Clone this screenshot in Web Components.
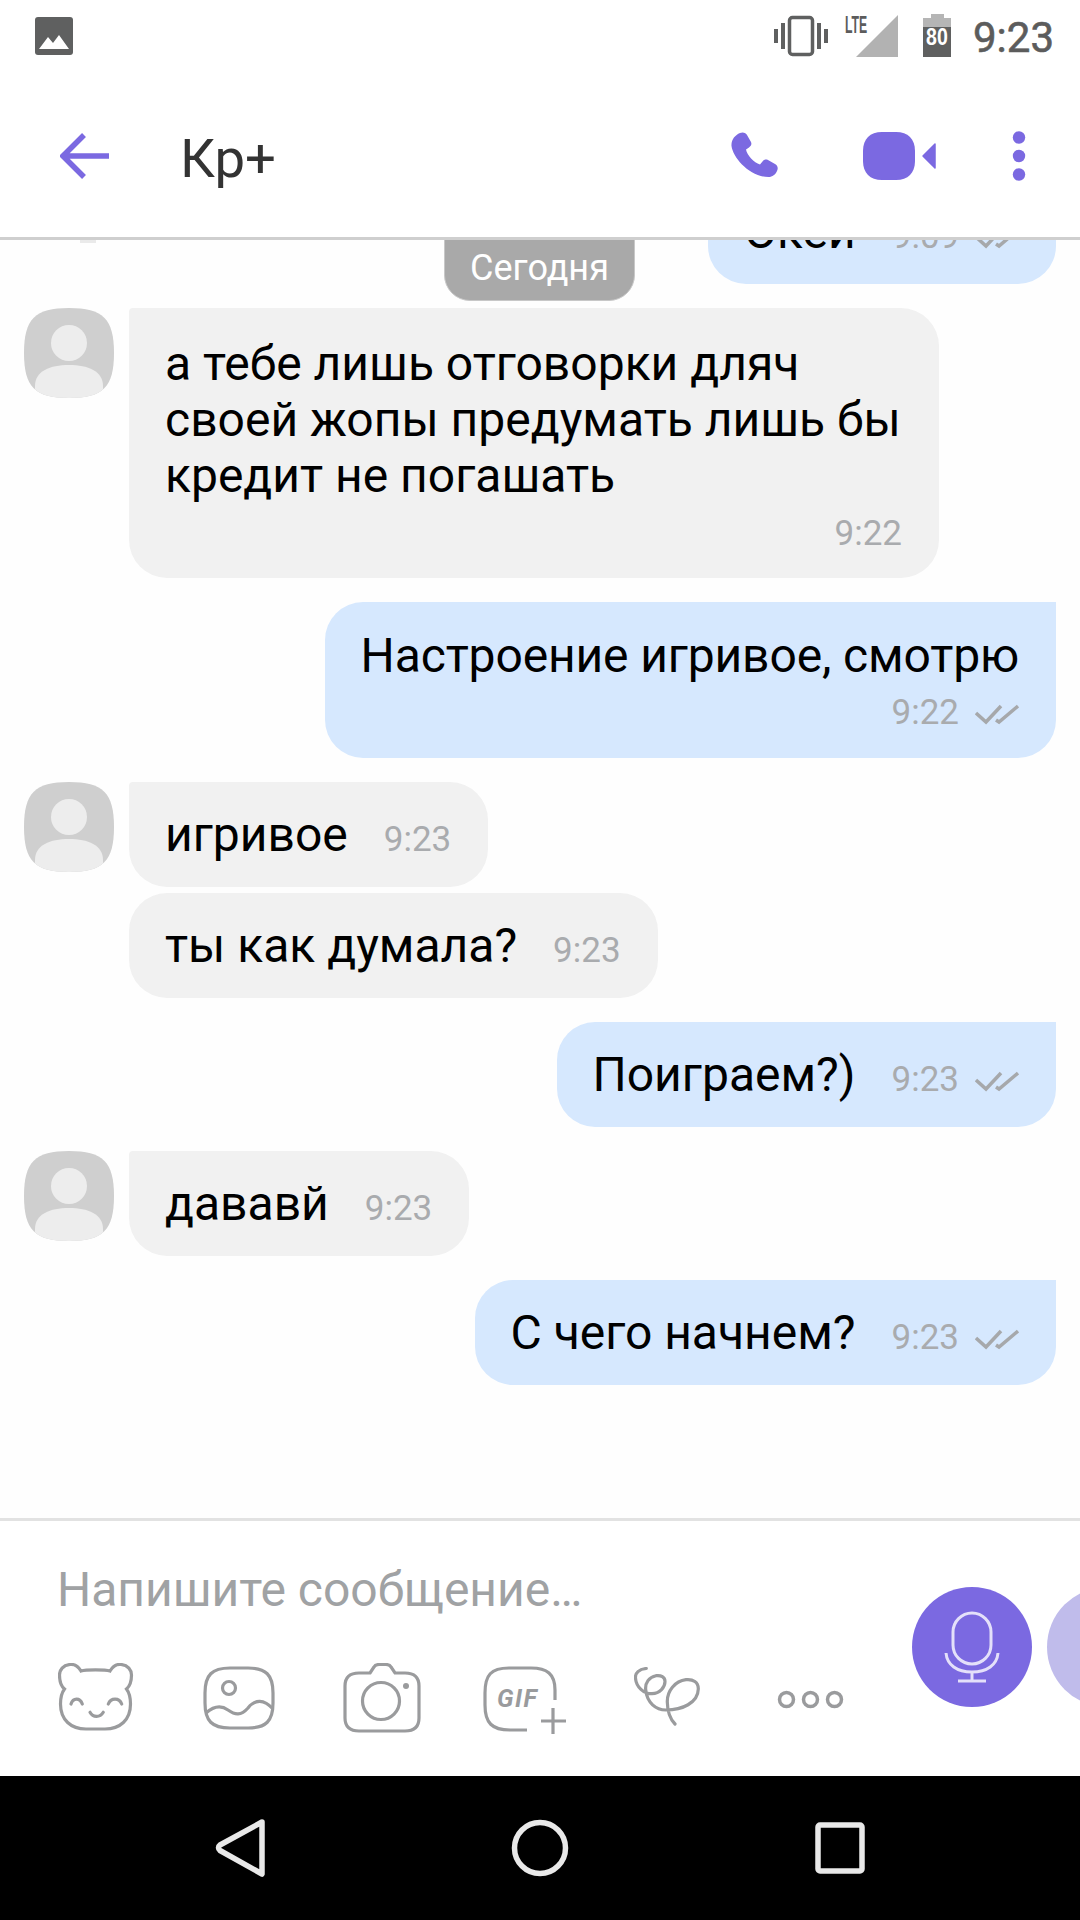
<!DOCTYPE html>
<html lang="ru"><head><meta charset="utf-8"><title>Кр+</title>
<style>
html,body{margin:0;padding:0;background:#fff}
body{width:1080px;height:1920px;overflow:hidden;display:flex;flex-direction:column;font-family:Roboto,"Noto Sans",sans-serif;color:#000}
x-chat{flex:1;min-height:0}
</style></head><body>
<x-status-bar></x-status-bar>
<x-app-header title="Кр+"></x-app-header>
<x-chat>
  <x-msg side="out" time="9:09" ticks style="--w:348px">Океи</x-msg>
  <x-msg side="in" avatar time="9:22" stacked style="--w:810px;--mt:24px;--pt:28px;--fm:6px;--pb:20px">а тебе лишь отговорки дляч<br>своей жопы предумать лишь бы<br>кредит не погашать</x-msg>
  <x-msg side="out" time="9:22" ticks stacked style="--mt:24px;--pt:26px;--fm:5px;--ls:-.14px">Настроение игривое, смотрю</x-msg>
  <x-msg side="in" avatar time="9:23" style="--mt:24px">игривое</x-msg>
  <x-msg side="in" time="9:23" follow style="--mt:6px">ты как думала?</x-msg>
  <x-msg side="out" time="9:23" ticks style="--mt:24px">Поиграем?)</x-msg>
  <x-msg side="in" avatar time="9:23" style="--mt:24px">дававй</x-msg>
  <x-msg side="out" time="9:23" ticks style="--mt:24px">С чего начнем?</x-msg>
</x-chat>
<x-composer placeholder="Напишите сообщение…"></x-composer>
<x-nav-bar></x-nav-bar>
<script>
function def(name, html){
  customElements.define(name, class extends HTMLElement{
    connectedCallback(){
      if(this.shadowRoot) return;
      const r=this.attachShadow({mode:'open'});
      r.innerHTML = typeof html==='function' ? html(this) : html;
    }
  });
}
const V='#7b69e1';
def('x-status-bar',`<style>
:host{display:flex;height:78px;align-items:flex-start;background:#fff;color:#5c5c5c;padding:0 26px 0 35px;box-sizing:border-box;flex:none}
svg{display:block;flex:none}
.sp{flex:1}
.lte{position:relative;width:53px;height:44px;margin:15px 0 0 17px;flex:none}
.lte span{position:absolute;left:0;top:-2px;font:700 24px/24px "Liberation Sans",sans-serif;transform:scaleX(.51);transform-origin:0 0}
.lte svg{position:absolute;left:11px;top:0}
.bat{position:relative;width:28px;height:43px;margin:14px 0 0 25px;flex:none}
.bat span{position:absolute;left:0;right:0;top:11px;text-align:center;color:#fff;font:700 23px/24px "Liberation Sans",sans-serif;transform:scaleX(.85)}
.t{font:400 42px/48px Roboto,sans-serif;margin:14px 0 0 22px;-webkit-text-stroke:.6px #5c5c5c}
</style>
<svg width="38" height="38" viewBox="0 0 38 38" style="margin-top:17px"><rect width="38" height="38" rx="3" fill="#5f6060"/><path d="M4 32l9-12 5 6 6-8 10 14z" fill="#fff"/></svg>
<div class="sp"></div>
<svg width="54" height="42" viewBox="0 0 54 42" style="margin-top:15px"><rect x="15.500" y="2.500" width="23" height="37" rx="3" fill="none" stroke="#5f6060" stroke-width="3.500"/><rect x="0" y="14" width="4" height="14" fill="#5f6060"/><rect x="7" y="8" width="4" height="26" fill="#5f6060"/><rect x="43" y="8" width="4" height="26" fill="#5f6060"/><rect x="50" y="14" width="4" height="14" fill="#5f6060"/></svg>
<div class="lte"><span>LTE</span><svg width="42" height="42" viewBox="0 0 42 42"><path d="M42 0v42H0z" fill="#b2b2b2"/></svg></div>
<div class="bat"><svg width="28" height="43" viewBox="0 0 28 43"><path d="M8 0h13v4h7v9H0V4h8z" fill="#b5b5b5"/><rect y="13" width="28" height="30" fill="#5f6060"/></svg><span>80</span></div>
<div class="t">9:23</div>`);
def('x-app-header',h=>`<style>
:host{display:flex;align-items:center;background:#fff;border-bottom:3px solid #cfcfcf;padding:0 54px 3px 60px;box-sizing:content-box;height:156px;position:relative;z-index:2;flex:none}
svg{display:block;flex:none}
.title{font:400 54.500px/64px Roboto,sans-serif;color:#333;margin:3px 0 0 71px;flex:1}
</style>
<svg width="49" height="48" viewBox="0 0 49 48"><path d="M24 3L3 24l21 21M3 24h46" fill="none" stroke="${V}" stroke-width="5.500"/></svg>
<div class="title">${h.getAttribute('title')}</div>
<svg width="48" height="48" viewBox="0 0 48 48"><path d="M9 1c3-1.500 6 0 7 2l4 7c1 2.500 0 4-2 5.500l-3 2c1 6 8 13 14 15l2.500-3c1.500-2 3.500-2.500 5.500-1.500l7 4c2.500 1.500 3.500 4 2 7-1.500 3.500-4.500 6-8.500 6C19 45 2 26 .5 14 0 8 4 3 9 1z" fill="${V}"/></svg>
<svg width="74" height="48" viewBox="0 0 74 48" style="margin-left:84px"><path d="M19 0h14c12 0 19 7 19 19v10c0 12-7 19-19 19H19C7 48 0 41 0 29V19C0 7 7 0 19 0z" fill="${V}"/><path d="M72 12v24L60 24z" fill="${V}" stroke="${V}" stroke-width="1.500" stroke-linejoin="round"/></svg>
<svg width="14" height="50" viewBox="0 0 14 50" style="margin-left:75px"><circle cx="7" cy="6.500" r="6.200" fill="${V}"/><circle cx="7" cy="25" r="6.200" fill="${V}"/><circle cx="7" cy="43.500" r="6.200" fill="${V}"/></svg>`);
def('x-chat',`<style>
:host{display:flex;flex-direction:column;justify-content:flex-end;overflow:hidden;background:#fefefe;padding:0 24px 133px;position:relative;box-sizing:border-box}
.pill{position:absolute;left:444px;top:-8px;width:191px;height:69px;box-sizing:border-box;background:#a9a9a9;border:1px solid #c8c8c8;border-radius:0 0 26px 26px;color:#fff;font:400 36px/40px Roboto,sans-serif;text-align:center;padding-top:15px}
.sliver{position:absolute;left:80px;top:0;width:16px;height:3px;background:#eaeaea}
</style><div class="pill">Сегодня</div><div class="sliver"></div><slot></slot>`);
def('x-avatar',`<style>
:host{display:block;width:90px;height:90px;flex:none}
svg{display:block}
</style><svg width="90" height="90" viewBox="0 0 90 90"><defs><clipPath id="c"><path d="M45 0c34 0 45 11 45 45s-11 45-45 45S0 79 0 45 11 0 45 0z"/></clipPath></defs><g clip-path="url(#c)"><rect width="90" height="90" fill="#cfcfcf"/><circle cx="45" cy="35" r="18" fill="#ededed"/><path d="M11 78C11 63 26 57 45 57s34 6 34 21v12H11z" fill="#ededed"/></g></svg>`);
const ticks=`<svg class="ticks" width="44" height="22" viewBox="0 0 44 22"><path d="M1 10l10 9L26 3M21 17l3 2L43 3" fill="none" stroke="#a6a8ab" stroke-width="3.500"/></svg>`;
def('x-msg',h=>{
  const out=h.getAttribute('side')==='out', st=h.hasAttribute('stacked'), w=h.style.getPropertyValue('--w');
  return `<style>
:host{display:flex;flex:none;margin-top:var(--mt,0);justify-content:${out?'flex-end':'flex-start'};gap:15px;${!out&&!h.hasAttribute('avatar')?'padding-left:105px;':''}}
.b{background:${out?'#d6e8fe':'#f1f1f1'};border-radius:${h.hasAttribute('follow')?'38px':out?'38px 0 38px 38px':'4px 38px 38px 38px'};padding:var(--pt,25px) 37px var(--pb,21px) 36px;font:400 48px/56px Roboto,sans-serif;color:#000;box-sizing:border-box;display:flex;${st?'flex-direction:column;':'align-items:baseline;gap:36px;'}${w?'width:var(--w);':''}}
.b.single{height:105px}
.f{display:flex;align-items:center;justify-content:flex-end;gap:16px;font:400 35px/48px Roboto,sans-serif;color:#a9abae;${st?'margin-top:var(--fm,6px);':''}align-self:${st?'flex-end':'baseline'}}
.ticks{display:block;margin-top:2px}
.tx{flex:${w&&!st?'1':'none'};letter-spacing:var(--ls,0)}
</style>${h.hasAttribute('avatar')?'<x-avatar></x-avatar>':''}<div class="b ${st?'':'single'}"><div class="tx"><slot></slot></div><div class="f"><span>${h.getAttribute('time')}</span>${h.hasAttribute('ticks')?ticks:''}</div></div>`;
});
const G='#9a9b9d';
def('x-composer',h=>`<style>
:host{display:flex;height:258px;box-sizing:border-box;border-top:3px solid #e2e2e2;background:#fff;overflow:hidden;flex:none;padding-left:58px}
.l{width:854px;flex:none}
.ph{font:400 48px/56px Roboto,sans-serif;color:#a0a2a4;margin:41px 0 0 -1px}
.tools{display:flex;align-items:flex-start;margin-top:45px}
svg{display:block;flex:none}
.r{display:flex;gap:15px;padding-top:66px;flex:none}
.c{width:120px;height:120px;border-radius:50%;background:${V};display:flex;align-items:center;justify-content:center;flex:none}
.c.b{background:#c0bceb}
</style><div class="l"><div class="ph">${h.getAttribute('placeholder')}</div><div class="tools">
<svg width="76" height="68" viewBox="0 0 76 68" fill="none" stroke="${G}" stroke-width="3.200" stroke-linecap="round"><path d="M23 8C20 3 16 1 12 1.500 5 2 1.500 7 1.500 12c0 6 1.500 11 5 14-3 4-4 9-4 15 0 16 10.500 25 25.500 25h19c15 0 25.500-9 25.500-25 0-6-1-11-4-15 3.500-3 5-8 5-14 0-5-3.500-10-10.500-10.500C59 1 55 3 52 8c-5-1.500-24-1.500-29 0z"/><path d="M13 41c2-6.500 9-6.500 11.300 0M50.300 41c2.500-6.500 11-6.500 13.400 0M32 49.300c3 5.500 10 5.500 13.300 0"/></svg>
<svg width="72" height="64" viewBox="0 0 72 64" style="margin:3px 0 0 69px" fill="none" stroke="${G}" stroke-width="3.200"><path d="M27 2h18c18 0 25 7 25 25v10c0 18-7 25-25 25H27C9 62 2 55 2 37V27C2 9 9 2 27 2z"/><circle cx="26" cy="22" r="6.500"/><path d="M3 47c8-7 15-8 22-3s13 6 20-2c7-9 16-9 25 1"/></svg>
<svg width="78" height="70" viewBox="0 0 78 70" style="margin-left:68px" fill="none" stroke="${G}" stroke-width="3.200"><path d="M27 10l4-6c1-2 3-2.500 5-2.500h7c2 0 4 .5 5 2.500l4 6h10c9 0 14 4 14 13v32c0 9-5 13-14 13H16c-9 0-14-4-14-13V23c0-9 5-13 14-13z"/><circle cx="38" cy="38" r="18.500"/><circle cx="63" cy="23" r="3" fill="${G}" stroke="none"/></svg>
<div style="position:relative;width:84px;height:68px;margin:3px 0 0 62px;flex:none;font:italic 700 25px/28px Roboto,sans-serif;color:${G}"><span style="position:absolute;left:14px;top:19px;letter-spacing:1.500px">GIF</span><svg style="position:absolute;left:0;top:0" width="84" height="68" viewBox="0 0 84 68" fill="none" stroke="${G}" stroke-width="3.200"><path d="M72 34V24C72 8 64 2 48 2H26C8 2 2 9 2 27v12c0 18 7 25 25 25h17"/><path d="M70 42v26M58 55h25"/></svg></div>
<svg width="68" height="60" viewBox="0 0 68 60" style="margin:4px 0 0 67px" fill="none" stroke="${G}" stroke-width="3.200" stroke-linecap="round"><path d="M12.300 1.500C5 2 1 6 1.500 11 2 20 10 27 18 26.700c8-.2 13-6.700 13-12.200C31 10 27 8 22 8.700 15 10 11 16 11.700 22.700 13 36 22 43 32 43c16 0 32-7 32.300-21 .2-7-5.300-10-12.300-9.300C41 14 33 24 33.300 35c.2 10 3.700 18 7.700 22"/></svg>
<svg width="67" height="19" viewBox="0 0 67 19" style="margin:27px 0 0 75px" fill="none" stroke="${G}" stroke-width="3.500"><circle cx="9.500" cy="9.500" r="7"/><circle cx="33.500" cy="9.500" r="7"/><circle cx="57.500" cy="9.500" r="7"/></svg>
</div></div><div class="r"><div class="c"><svg width="56" height="72" viewBox="0 0 56 72" fill="none" stroke="#e4e0fa" stroke-width="3"><rect x="9" y="2" width="38" height="51" rx="19"/><path d="M2 42c1 12 11 19 26 19s25-7 26-19M28 61v9M14 70h28"/></svg></div><div class="c b"></div></div>`);
def('x-nav-bar',`<style>
:host{display:flex;height:144px;background:#000;align-items:center;justify-content:center;flex:none}
svg{display:block}
</style><svg width="650" height="60" viewBox="0 0 650 60" fill="none" stroke="#e9e9e9" stroke-width="5.500" stroke-linejoin="round"><path d="M46 4L4 27c-2 1.500-2 4 0 5.500L46 56z" transform="translate(1 0)"/><circle cx="325" cy="30" r="25.500"/><rect x="603" y="7" width="44" height="46" rx="2"/></svg>`);
</script>
</body></html>
